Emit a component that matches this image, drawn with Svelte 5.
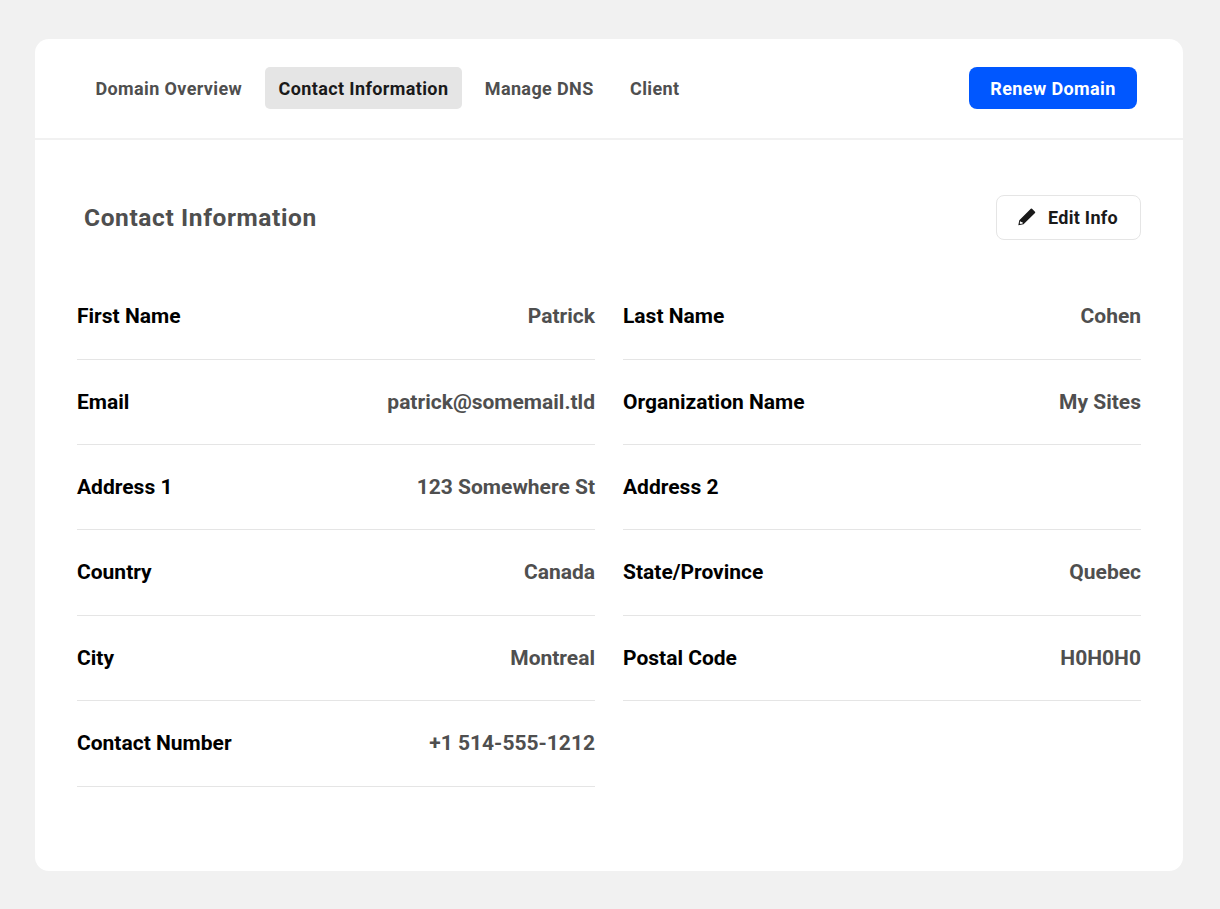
<script>
  const tabs = ['Domain Overview', 'Contact Information', 'Manage DNS', 'Client'];
  let active = $state('Contact Information');
  const fields = [
    ['First Name', 'Patrick'], ['Last Name', 'Cohen'],
    ['Email', 'patrick@somemail.tld'], ['Organization Name', 'My Sites'],
    ['Address 1', '123 Somewhere St'], ['Address 2', ''],
    ['Country', 'Canada'], ['State/Province', 'Quebec'],
    ['City', 'Montreal'], ['Postal Code', 'H0H0H0'],
    ['Contact Number', '+1 514-555-1212']
  ];
</script>

<div class="page">
  <main class="card">
    <header>
      <nav>
        {#each tabs as tab}
          <button class="tab" class:active={tab === active} onclick={() => (active = tab)}>{tab}</button>
        {/each}
      </nav>
      <button class="renew">Renew Domain</button>
    </header>
    <section>
      <div class="title">
        <h1>Contact Information</h1>
        <button class="edit">
          <svg width="18" height="18" viewBox="0 0 18 18" fill="#1a1a1a">
            <path fill-rule="evenodd" d="M.3 17.2 1.3 12.2 12.8.7Q13.4.1 14 .7L17 3.7Q17.6 4.3 17 4.9L5.5 16.2ZM2.2 13.2 1.7 15.2 2.5 16 4.7 15.4 4.6 14.2 3.3 14.1Z" />
          </svg>
          Edit Info
        </button>
      </div>
      <dl>
        {#each fields as [label, value]}
          <div class="row"><dt>{label}</dt><dd>{value}</dd></div>
        {/each}
      </dl>
    </section>
  </main>
</div>

<style>
  :global(body) { margin: 0; background: #f1f1f1; }
  .page { box-sizing: border-box; height: 909px; padding: 39px 37px 38px 35px; font-family: Roboto, sans-serif; }
  .card { height: 832px; background: #fff; border-radius: 14px; }
  header { box-sizing: border-box; height: 101px; padding: 28px 46px 0 47px; display: flex; justify-content: space-between; align-items: flex-start; border-bottom: 2px solid #f1f1f1; }
  nav { display: flex; gap: 9.6px; }
  button { box-sizing: border-box; margin: 0; border: 0; font: 700 18px/22px Roboto, sans-serif; white-space: nowrap; }
  .tab { height: 42px; padding: 2px 13.4px 0; border-radius: 5px; color: #4f4f4f; background: transparent; letter-spacing: .38px; }
  .tab.active { color: #1a1a1a; background: #e5e5e5; }
  .renew { width: 168px; height: 42px; padding: 2px 0 0; border-radius: 8px; color: #fff; background: #0057ff; letter-spacing: .38px; }
  section { padding: 55px 42px 0; }
  .title { display: flex; justify-content: space-between; align-items: center; height: 45px; padding-left: 7px; }
  h1 { margin: 0; font-size: 24.5px; line-height: 30px; font-weight: 700; color: #4f4f4f; letter-spacing: .61px; }
  .edit { display: flex; align-items: center; justify-content: center; gap: 12px; width: 145px; height: 45px; padding: 0 1px 0 0; border: 1px solid #e5e5e5; border-radius: 8px; background: #fff; color: #1a1a1a; letter-spacing: .3px; }
  .edit svg { margin-top: -2px; }
  dl { display: grid; grid-template-columns: 1fr 1fr; column-gap: 28px; grid-auto-rows: 85.4px; margin: 34.2px 0 0; }
  .row { box-sizing: border-box; display: flex; justify-content: space-between; align-items: center; padding-bottom: .4px; border-bottom: 1px solid #e5e5e5; font-size: 21px; line-height: 26px; font-weight: 700; }
  dt { color: #000; }
  dd { margin: 0; color: #4f4f4f; }
</style>
